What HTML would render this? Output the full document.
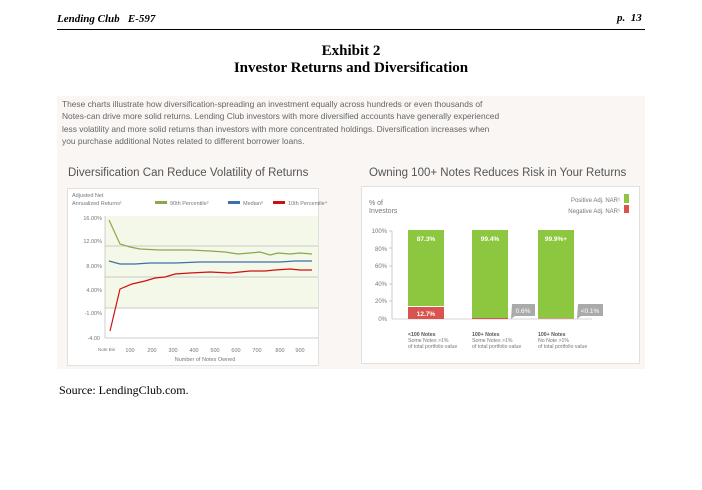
<!DOCTYPE html>
<html><head><meta charset="utf-8"><style>
body{margin:0;width:702px;height:490px;background:#fff;position:relative;overflow:hidden;font-family:"Liberation Sans",sans-serif}
.a{position:absolute;white-space:nowrap}
.serif{font-family:"Liberation Serif",serif}
</style></head><body>
<div class="a serif" style="left:57px;top:13px;font-size:11px;font-weight:bold;font-style:italic">Lending Club&nbsp;&nbsp; E-597</div>
<div class="a serif" style="left:617px;top:12px;font-size:11px;font-weight:bold;font-style:italic">p.&nbsp; 13</div>
<div class="a" style="left:57px;top:29px;width:588px;height:1px;background:#000"></div>
<div class="a serif" style="left:0;width:702px;text-align:center;top:43px;font-size:15px;font-weight:bold;line-height:17px">Exhibit 2<br>Investor Returns and Diversification</div>
<div class="a" style="left:57px;top:96px;width:588px;height:273px;background:#f9f6f4"></div>
<div class="a" style="left:62px;top:98px;font-size:8.4px;line-height:12.4px;color:#666">These charts illustrate how diversification-spreading an investment equally across hundreds or even thousands of<br>Notes-can drive more solid returns. Lending Club investors with more diversified accounts have generally experienced<br>less volatility and more solid returns than investors with more concentrated holdings. Diversification increases when<br>you purchase additional Notes related to different borrower loans.</div>
<div class="a" style="left:68px;top:167px;font-size:11.5px;color:#555">Diversification Can Reduce Volatility of Returns</div>
<div class="a" style="left:369px;top:167px;font-size:11.5px;color:#555">Owning 100+ Notes Reduces Risk in Your Returns</div>
<svg class="a" style="left:0;top:0" width="702" height="490" font-family="Liberation Sans, sans-serif">
<rect x="67.5" y="188.5" width="251" height="177" fill="#fff" stroke="#e2dfdc"/>
<rect x="361.5" y="186.5" width="278" height="177" fill="#fff" stroke="#e2dfdc"/>
<rect x="105" y="216" width="213" height="92" fill="#f4f8e8"/>
<g stroke="#bbb" stroke-width="0.7"><line x1="105" y1="246" x2="318" y2="246"/><line x1="105" y1="277" x2="318" y2="277"/><line x1="105" y1="308" x2="318" y2="308"/><line x1="105" y1="216" x2="105" y2="338"/><line x1="105" y1="338" x2="318" y2="338"/></g>
<g font-size="5.5" fill="#777">
<text x="72" y="197">Adjusted Net</text><text x="72" y="205">Annualized Returns¹</text>
<rect x="155" y="201" width="12" height="3" fill="#8aa84a"/><text x="170" y="205">90th Percentile²</text>
<rect x="228" y="201" width="12" height="3" fill="#3d6fa8"/><text x="243" y="205">Median³</text>
<rect x="273" y="201" width="12" height="3" fill="#d01010"/><text x="288" y="205">10th Percentile⁴</text>
<text x="102" y="220" text-anchor="end">16.00%</text><text x="102" y="243" text-anchor="end">12.00%</text><text x="102" y="268" text-anchor="end">8.00%</text><text x="102" y="292" text-anchor="end">4.00%</text><text x="102" y="315" text-anchor="end">-1.00%</text><text x="100" y="340" text-anchor="end">-4.00</text>
<text x="98" y="351" font-size="4.5">Note Bin</text>
<text x="130" y="352" text-anchor="middle">100</text><text x="152" y="352" text-anchor="middle">200</text><text x="173" y="352" text-anchor="middle">300</text><text x="194" y="352" text-anchor="middle">400</text><text x="215" y="352" text-anchor="middle">500</text><text x="236" y="352" text-anchor="middle">600</text><text x="257" y="352" text-anchor="middle">700</text><text x="280" y="352" text-anchor="middle">800</text><text x="300" y="352" text-anchor="middle">900</text>
<text x="205" y="361" text-anchor="middle">Number of Notes Owned</text>
</g>
<polyline fill="none" stroke="#8aa84a" stroke-width="1.2" points="109,220 120,244 130,247 140,249 160,250 190,250 210,251 225,252 238,254 250,253 260,252 270,255 278,253 290,254 300,253 312,254"/>
<polyline fill="none" stroke="#3d6fa8" stroke-width="1.2" points="109,261 120,264 135,264 150,263 175,263 200,262 230,262 260,262 280,262 295,261 312,261"/>
<polyline fill="none" stroke="#d01010" stroke-width="1.2" points="110,331 120,289 132,284 145,281 155,278 165,277 175,274 190,273 210,272 230,273 250,271 265,271 275,270 290,269 300,270 312,270"/>
<g font-size="6" fill="#777">
<text x="369" y="205" font-size="7">% of</text><text x="369" y="213" font-size="7">Investors</text>
<text x="620" y="202" text-anchor="end">Positive Adj. NAR¹</text><rect x="624" y="194" width="5" height="9" fill="#8dc63f"/>
<text x="620" y="213" text-anchor="end">Negative Adj. NAR¹</text><rect x="624" y="205" width="5" height="8" fill="#d9534f"/>
<text x="387" y="233" text-anchor="end">100%</text><text x="387" y="251" text-anchor="end">80%</text><text x="387" y="268" text-anchor="end">60%</text><text x="387" y="286" text-anchor="end">40%</text><text x="387" y="303" text-anchor="end">20%</text><text x="387" y="321" text-anchor="end">0%</text>
</g>
<g stroke="#aaa" stroke-width="0.6"><line x1="392" y1="231" x2="392" y2="319"/><line x1="392" y1="319" x2="592" y2="319"/><line x1="389" y1="231" x2="392" y2="231"/><line x1="389" y1="248" x2="392" y2="248"/><line x1="389" y1="266" x2="392" y2="266"/><line x1="389" y1="284" x2="392" y2="284"/><line x1="389" y1="301" x2="392" y2="301"/></g>
<rect x="408" y="230" width="36" height="76" fill="#8dc63f"/><rect x="408" y="307" width="36" height="12" fill="#d9534f"/>
<rect x="472" y="230" width="36" height="88" fill="#8dc63f"/><rect x="472" y="318" width="36" height="1" fill="#d9534f"/>
<rect x="538" y="230" width="36" height="88" fill="#8dc63f"/><rect x="538" y="318" width="36" height="1" fill="#c8a080"/>
<g font-size="6.5" fill="#fff" font-weight="bold"><text x="426" y="241" text-anchor="middle">87.3%</text><text x="490" y="241" text-anchor="middle">99.4%</text><text x="556" y="241" text-anchor="middle">99.9%+</text><text x="426" y="316" text-anchor="middle">12.7%</text></g>
<path d="M512,304 h23 v12 h-20 l-4,3 z" fill="#aaa"/><text x="523" y="313" font-size="6.5" fill="#fff" text-anchor="middle">0.6%</text>
<path d="M578,304 h25 v12 h-22 l-4,3 z" fill="#aaa"/><text x="590" y="313" font-size="6.5" fill="#fff" text-anchor="middle">&lt;0.1%</text>
<g font-size="5.2" fill="#777"><text x="408" y="336" fill="#555" font-weight="bold">&lt;100 Notes</text><text x="408" y="342">Some Notes &gt;1%</text><text x="408" y="348">of total portfolio value</text>
<text x="472" y="336" fill="#555" font-weight="bold">100+ Notes</text><text x="472" y="342">Some Notes &gt;1%</text><text x="472" y="348">of total portfolio value</text>
<text x="538" y="336" fill="#555" font-weight="bold">100+ Notes</text><text x="538" y="342">No Note &gt;1%</text><text x="538" y="348">of total portfolio value</text></g>
</svg>
<div class="a serif" style="left:59px;top:383px;font-size:12px">Source: LendingClub.com.</div>
</body></html>
